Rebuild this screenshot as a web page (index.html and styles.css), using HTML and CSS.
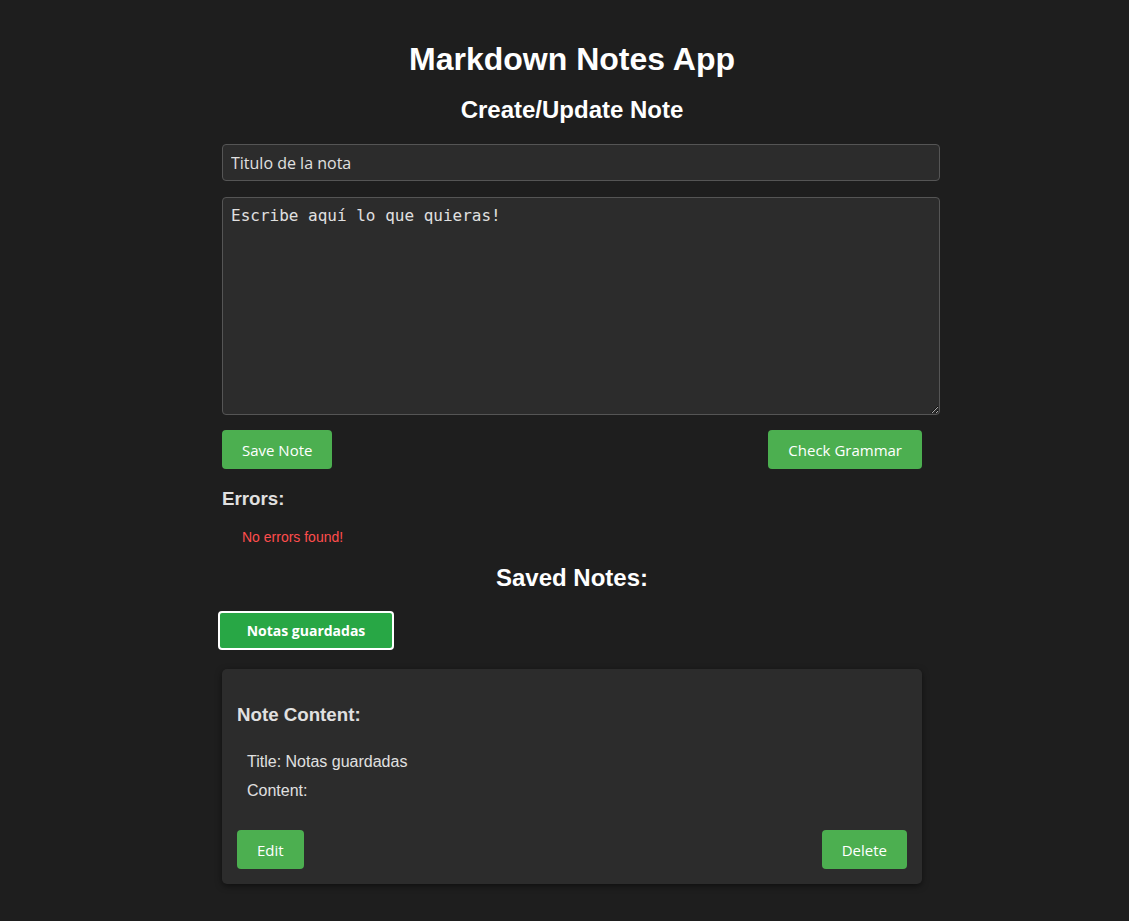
FILE: index.html
```html
<!DOCTYPE html>
<html lang="es">
<head>
<meta charset="utf-8">
<title>Markdown Notes App</title>
<link rel="stylesheet" href="styles.css">
</head>
<body>
<div class="app">
  <h1 class="title">Markdown Notes App</h1>
  <h2 class="subtitle">Create/Update Note</h2>
  <input class="title-input" type="text" value="Titulo de la nota">
  <textarea class="content-input">Escribe aquí lo que quieras!</textarea>
  <div class="actions">
    <button class="btn">Save Note</button>
    <button class="btn">Check Grammar</button>
  </div>
  <h3 class="errors-title">Errors:</h3>
  <ul class="errors">
    <li>No errors found!</li>
  </ul>
  <h2 class="subtitle saved">Saved Notes:</h2>
  <div class="note-list">
    <button class="note-tab">Notas guardadas</button>
  </div>
  <div class="card">
    <h3 class="card-title">Note Content:</h3>
    <div class="card-body">
      <p>Title: Notas guardadas</p>
      <p>Content: </p>
    </div>
    <div class="actions">
      <button class="btn">Edit</button>
      <button class="btn">Delete</button>
    </div>
  </div>
</div>
</body>
</html>
```
FILE: styles.css
```css
html, body {
  background: #1e1e1e;
}
body {
  margin: 0;
  padding: 20px 0 20px 15px;
  font-family: "Liberation Sans", Arial, sans-serif;
  color: #e0e0e0;
}
.app {
  width: 700px;
  margin: 0 auto;
}
.title {
  font-size: 32px;
  font-weight: bold;
  color: #ffffff;
  text-align: center;
  margin: 21px 0 18px;
}
.subtitle {
  font-size: 24px;
  font-weight: bold;
  color: #ffffff;
  text-align: center;
  margin: 0 0 20px;
}
.title-input, .content-input {
  display: block;
  width: 700px;
  padding: 8px;
  background: #2c2c2c;
  color: #e0e0e0;
  border: 1px solid #555;
  border-radius: 4px;
  margin: 0 0 16px;
}
.title-input {
  font-family: "Open Sans", "Noto Sans", sans-serif;
  font-size: 16px;
  height: 19px;
  box-sizing: content-box;
}
.content-input {
  font-family: "DejaVu Sans Mono", monospace;
  font-size: 16px;
  height: 200px;
  resize: vertical;
  margin-bottom: 15px;
}
.actions {
  display: flex;
  justify-content: space-between;
}
.btn {
  background: #4caf50;
  color: #fff;
  border: none;
  border-radius: 4px;
  font-family: "Open Sans", "Noto Sans", sans-serif;
  font-size: 15px;
  padding: 0 20px;
  height: 39px;
}
.errors-title {
  font-size: 18.72px;
  font-weight: bold;
  margin: 19px 0 19px;
}
.errors {
  list-style: none;
  margin: 0;
  padding: 0 0 0 20px;
}
.errors li {
  color: #ff4d4d;
  font-size: 14px;
}
.saved {
  margin: 19px 0 19px;
}
.note-list {
  margin: 0 0 19px -4px;
}
.note-tab {
  background: #28a745;
  color: #fff;
  border: 2px solid #fff;
  border-radius: 4px;
  font-family: "Open Sans", "Noto Sans", sans-serif;
  font-weight: bold;
  font-size: 14px;
  width: 176px;
  height: 39px;
}
.card {
  background: #2c2c2c;
  border-radius: 5px;
  padding: 15px;
  box-shadow: 0 2px 6px rgba(0, 0, 0, 0.5);
}
.card-title {
  font-size: 18.72px;
  font-weight: bold;
  margin: 20px 0 27px;
}
.card-body {
  padding-left: 10px;
  margin-bottom: 30px;
}
.card-body p {
  margin: 0 0 11px;
  font-size: 16px;
}
```
